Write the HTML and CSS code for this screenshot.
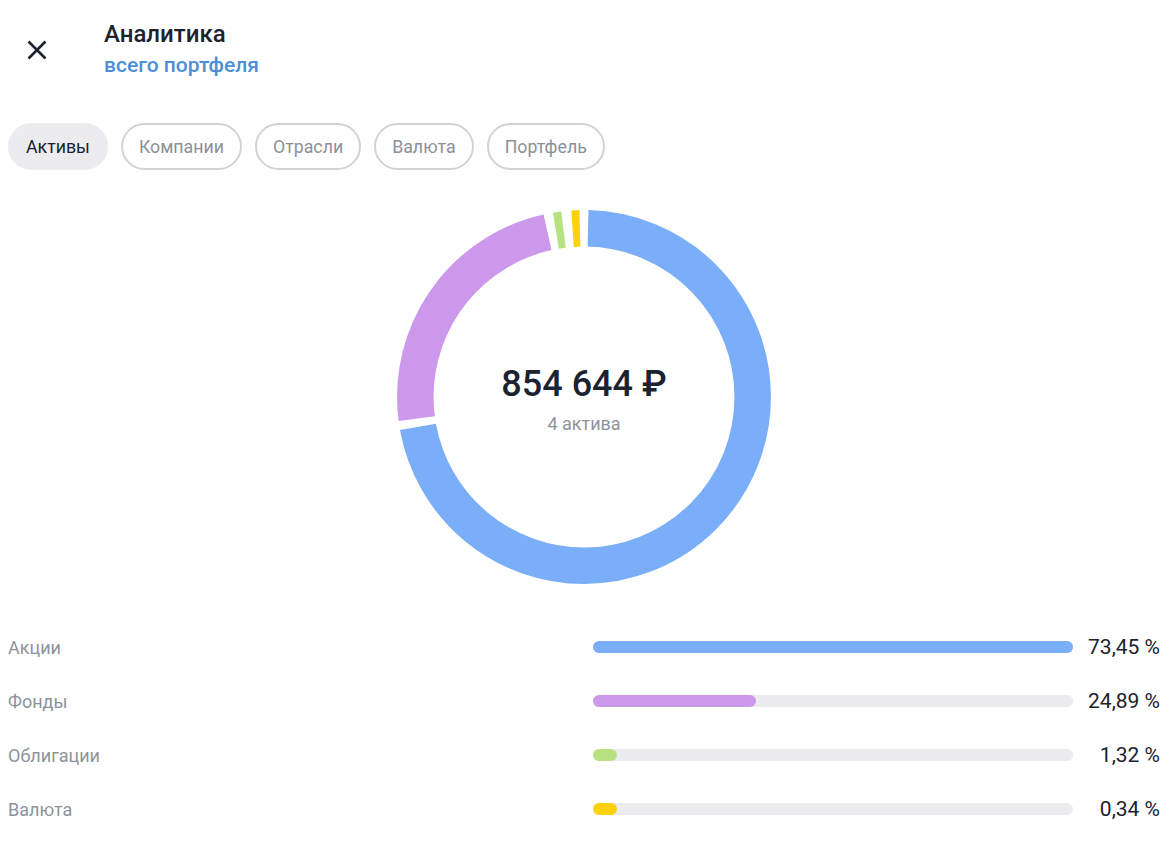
FILE: index.html
```html
<!DOCTYPE html>
<html lang="ru">
<head>
<meta charset="utf-8">
<title>Аналитика</title>
<link rel="stylesheet" href="styles.css">
</head>
<body>
<div class="page">
  <header class="header">
    <button class="close" aria-label="Закрыть">
      <svg width="20" height="20" viewBox="0 0 20 20"><path d="M1.5 1.5 L18.5 18.5 M18.5 1.5 L1.5 18.5" stroke="#1b2230" stroke-width="2.6" stroke-linecap="butt" fill="none"/></svg>
    </button>
    <div class="titles">
      <div class="title">Аналитика</div>
      <div class="subtitle">всего портфеля</div>
    </div>
  </header>

  <nav class="tabs">
    <span class="tab active">Активы</span>
    <span class="tab">Компании</span>
    <span class="tab">Отрасли</span>
    <span class="tab">Валюта</span>
    <span class="tab">Портфель</span>
  </nav>

  <section class="chart">
    <div class="donut">
      <svg width="376" height="376" viewBox="0 0 376 376">
        <g transform="rotate(-90 188 188)" fill="none" stroke-width="36.5">
          <circle cx="188" cy="188" r="168.7" pathLength="360" stroke="#7aaef8" stroke-dasharray="258.4 101.6" stroke-dashoffset="-1.4"/>
          <circle cx="188" cy="188" r="168.7" pathLength="360" stroke="#cc98eb" stroke-dasharray="84.9 275.1" stroke-dashoffset="-262.6"/>
          <circle cx="188" cy="188" r="168.7" pathLength="360" stroke="#b7e27f" stroke-dasharray="2.6 357.4" stroke-dashoffset="-350.4"/>
          <circle cx="188" cy="188" r="168.7" pathLength="360" stroke="#fdd10b" stroke-dasharray="2.5 357.5" stroke-dashoffset="-356.1"/>
        </g>
      </svg>
      <div class="center">
        <div class="total">854 644 ₽</div>
        <div class="count">4 актива</div>
      </div>
    </div>
  </section>

  <section class="rows">
    <div class="row">
      <span class="label">Акции</span>
      <span class="track"><span class="fill blue" style="width:100%"></span></span>
      <span class="pct">73,45 %</span>
    </div>
    <div class="row">
      <span class="label">Фонды</span>
      <span class="track"><span class="fill purple" style="width:33.9%"></span></span>
      <span class="pct">24,89 %</span>
    </div>
    <div class="row">
      <span class="label">Облигации</span>
      <span class="track"><span class="fill green" style="width:24px"></span></span>
      <span class="pct">1,32 %</span>
    </div>
    <div class="row">
      <span class="label">Валюта</span>
      <span class="track"><span class="fill yellow" style="width:24px"></span></span>
      <span class="pct">0,34 %</span>
    </div>
  </section>
</div>
</body>
</html>
```

FILE: styles.css
```css
* { box-sizing: border-box; }
html, body { margin: 0; padding: 0; background: #ffffff; }
body {
  font-family: Roboto, "Noto Sans", "Liberation Sans", sans-serif;
  color: #1b2230;
}
.page {
  width: 1170px;
  padding: 0 10px 0 8px;
}
.header {
  display: flex;
  align-items: flex-start;
  padding-top: 20px;
  height: 123px;
}
.close {
  display: flex;
  align-items: center;
  justify-content: center;
  width: 20px;
  height: 20px;
  margin: 20px 0 0 19px;
  padding: 0;
  border: 0;
  background: none;
}
.titles {
  margin-left: 57px;
  display: flex;
  flex-direction: column;
}
.title {
  font-size: 24px;
  line-height: 28px;
  font-weight: 500;
  color: #1b2230;
}
.subtitle {
  font-size: 21px;
  line-height: 26px;
  font-weight: 500;
  color: #4d8fd6;
  margin-top: 4px;
}
.tabs {
  display: flex;
  gap: 13px;
}
.tab {
  display: flex;
  align-items: center;
  height: 47px;
  padding: 0 16px;
  border: 2px solid #d2d3d7;
  border-radius: 24px;
  font-size: 17.75px;
  color: #8b9099;
}
.tab.active {
  background: #ececef;
  border-color: #ececef;
  color: #1b2230;
}
.chart {
  display: flex;
  justify-content: center;
  padding-top: 39px;
}
.donut {
  position: relative;
  width: 376px;
  height: 376px;
}
.donut svg { display: block; }
.center {
  position: absolute;
  inset: 0;
  display: flex;
  flex-direction: column;
  align-items: center;
  justify-content: center;
}
.total {
  font-size: 36px;
  line-height: 42px;
  font-weight: 500;
  color: #1b2230;
  margin-top: 4px;
}
.count {
  font-size: 18px;
  line-height: 22px;
  color: #8e939b;
  margin-top: 8px;
}
.rows {
  padding-top: 35px;
  display: flex;
  flex-direction: column;
}
.row {
  display: flex;
  align-items: center;
  height: 54px;
}
.label {
  flex: 0 0 585px;
  font-size: 18px;
  color: #8e939b;
}
.track {
  flex: 1 1 auto;
  height: 12px;
  border-radius: 6px;
  background: #ececef;
  display: flex;
}
.fill {
  height: 12px;
  border-radius: 6px;
}
.fill.blue { background: #7aaef8; }
.fill.purple { background: #cc98eb; }
.fill.green { background: #b7e27f; }
.fill.yellow { background: #fdd10b; }
.pct {
  flex: 0 0 87px;
  text-align: right;
  font-size: 21px;
  color: #1b2230;
}
```
